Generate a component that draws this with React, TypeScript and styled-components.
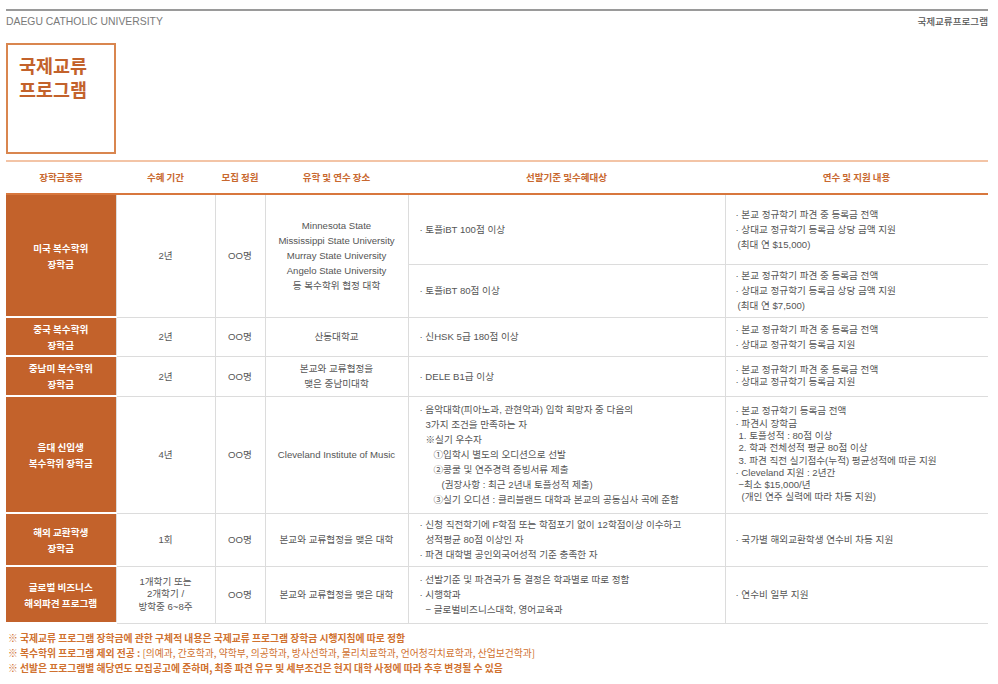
import React from "react";
import styled, { createGlobalStyle } from "styled-components";

const GlobalStyle = createGlobalStyle`
  html, body {
    margin: 0;
    padding: 0;
    background: #fff;
  }
  body {
    font-family: "Liberation Sans", "Noto Sans CJK KR", sans-serif;
    color: #555;
  }
`;

const orange = "#c3622b";

const Page = styled.div`
  width: 982px;
  padding: 9px 10px 0 6px;
`;

const TopBar = styled.div`
  border-top: 2px solid #9a9a9a;
  display: flex;
  justify-content: space-between;
  align-items: center;
  height: 18px;
  padding-top: 1px;
`;

const Brand = styled.span`
  font-size: 10.4px;
  color: #7a7a7a;
`;

const Section = styled.span`
  font-size: 9.6px;
  color: #555;
  font-family: "Noto Sans CJK KR", sans-serif;
  font-weight: 500;
`;

const TitleBox = styled.div`
  margin-top: 13px;
  width: 106px;
  height: 107px;
  border: 2px solid #d9864f;
`;

const Title = styled.h1`
  margin: 0;
  padding: 8px 0 0 11px;
  font-family: "Noto Sans CJK KR", sans-serif;
  font-size: 18.5px;
  font-weight: 700;
  line-height: 24px;
  color: ${orange};
`;

const Divider = styled.div`
  margin-top: 6px;
  border-top: 2px solid #f3c4a6;
`;

const Table = styled.table`
  width: 982px;
  border-collapse: collapse;
  table-layout: fixed;
  font-size: 9.6px;
  line-height: 15px;
`;

const HeadCell = styled.th`
  height: 31px;
  padding: 0;
  font-family: "Noto Sans CJK KR", sans-serif;
  font-size: 9.5px;
  font-weight: 700;
  color: #c8682f;
  text-align: center;
  border-bottom: 2px solid #d8773d;
`;

const KindCell = styled.td`
  background: ${orange};
  color: #fff;
  text-align: center;
  font-family: "Noto Sans CJK KR", sans-serif;
  font-size: 9.6px;
  font-weight: 700;
  line-height: 16px;
  border-bottom: 2px solid #fff;
  padding: 0;
`;

const Cell = styled.td<{ $align?: "left" | "center"; $tight?: boolean }>`
  text-align: ${(p) => p.$align || "center"};
  vertical-align: middle;
  border: 1px solid #dcdcdc;
  border-top: none;
  padding: ${(p) => (p.$align === "left" ? "0 4px 0 11px" : "0 2px")};
  line-height: ${(p) => (p.$tight ? "12.3px" : "15px")};
  white-space: nowrap;
  color: #555;
  &:last-child {
    border-right: none;
    padding-left: 10px;
  }
`;

const Line = styled.div<{ $indent?: number }>`
  padding-left: ${(p) => p.$indent || 0}px;
`;

const Row = styled.tr<{ $h: number }>`
  height: ${(p) => p.$h}px;
`;

const Notes = styled.div`
  margin-top: 7px;
  padding-left: 2px;
  font-family: "Noto Sans CJK KR", sans-serif;
  font-size: 9.8px;
  line-height: 15px;
  color: #d0712f;
  font-weight: 700;
  white-space: nowrap;
`;

const Light = styled.span`
  font-weight: 400;
`;

const lines = (items: [string, number?][]) =>
  items.map(([t, i], k) => (
    <Line key={k} $indent={i}>
      {t}
    </Line>
  ));

export default function App() {
  return (
    <>
      <GlobalStyle />
      <Page>
        <TopBar>
          <Brand>DAEGU CATHOLIC UNIVERSITY</Brand>
          <Section>국제교류프로그램</Section>
        </TopBar>
        <TitleBox>
          <Title>
            국제교류
            <br />
            프로그램
          </Title>
        </TitleBox>
        <Divider />
        <Table>
          <colgroup>
            <col style={{ width: 110 }} />
            <col style={{ width: 99 }} />
            <col style={{ width: 50 }} />
            <col style={{ width: 143 }} />
            <col style={{ width: 317 }} />
            <col style={{ width: 263 }} />
          </colgroup>
          <thead>
            <tr>
              <HeadCell>장학금종류</HeadCell>
              <HeadCell>수혜 기간</HeadCell>
              <HeadCell>모집 정원</HeadCell>
              <HeadCell>유학 및 연수 장소</HeadCell>
              <HeadCell>선발기준 및수혜대상</HeadCell>
              <HeadCell>연수 및 지원 내용</HeadCell>
            </tr>
          </thead>
          <tbody>
            <Row $h={70}>
              <KindCell rowSpan={2}>
                미국 복수학위
                <br />
                장학금
              </KindCell>
              <Cell rowSpan={2}>2년</Cell>
              <Cell rowSpan={2}>OO명</Cell>
              <Cell rowSpan={2}>
                {lines([
                  ["Minnesota State"],
                  ["Mississippi State University"],
                  ["Murray State University"],
                  ["Angelo State University"],
                  ["등 복수학위 협정 대학"],
                ])}
              </Cell>
              <Cell $align="left">· 토플iBT 100점 이상</Cell>
              <Cell $align="left">
                {lines([
                  ["· 본교 정규학기 파견 중 등록금 전액"],
                  ["· 상대교 정규학기 등록금 상당 금액 지원"],
                  ["(최대 연 $15,000)", 2],
                ])}
              </Cell>
            </Row>
            <Row $h={53}>
              <Cell $align="left">· 토플iBT 80점 이상</Cell>
              <Cell $align="left">
                {lines([
                  ["· 본교 정규학기 파견 중 등록금 전액"],
                  ["· 상대교 정규학기 등록금 상당 금액 지원"],
                  ["(최대 연 $7,500)", 2],
                ])}
              </Cell>
            </Row>
            <Row $h={39}>
              <KindCell>
                중국 복수학위
                <br />
                장학금
              </KindCell>
              <Cell>2년</Cell>
              <Cell>OO명</Cell>
              <Cell>산동대학교</Cell>
              <Cell $align="left">· 신HSK 5급 180점 이상</Cell>
              <Cell $align="left">
                {lines([
                  ["· 본교 정규학기 파견 중 등록금 전액"],
                  ["· 상대교 정규학기 등록금 지원"],
                ])}
              </Cell>
            </Row>
            <Row $h={40}>
              <KindCell>
                중남미 복수학위
                <br />
                장학금
              </KindCell>
              <Cell>2년</Cell>
              <Cell>OO명</Cell>
              <Cell>
                {lines([["본교와 교류협정을"], ["맺은 중남미대학"]])}
              </Cell>
              <Cell $align="left">· DELE B1급 이상</Cell>
              <Cell $align="left" $tight>
                {lines([
                  ["· 본교 정규학기 파견 중 등록금 전액"],
                  ["· 상대교 정규학기 등록금 지원"],
                ])}
              </Cell>
            </Row>
            <Row $h={117}>
              <KindCell>
                음대 신입생
                <br />
                복수학위 장학금
              </KindCell>
              <Cell>4년</Cell>
              <Cell>OO명</Cell>
              <Cell>Cleveland Institute of Music</Cell>
              <Cell $align="left">
                {lines([
                  ["· 음악대학(피아노과, 관현악과) 입학 희망자 중 다음의"],
                  ["3가지 조건을 만족하는 자", 6],
                  ["※실기 우수자", 6],
                  ["①입학시 별도의 오디션으로 선발", 14],
                  ["②콩쿨 및 연주경력 증빙서류 제출", 14],
                  ["(권장사항 : 최근 2년내 토플성적 제출)", 22],
                  ["③실기 오디션 : 클리블랜드 대학과 본교의 공동심사 곡에 준함", 14],
                ])}
              </Cell>
              <Cell $align="left" $tight>
                {lines([
                  ["· 본교 정규학기 등록금 전액"],
                  ["· 파견시 장학금"],
                  ["1. 토플성적 : 80점 이상", 3],
                  ["2. 학과 전체성적 평균 80점 이상", 3],
                  ["3. 파견 직전 실기점수(누적) 평균성적에 따른 지원", 3],
                  ["· Cleveland 지원 : 2년간"],
                  ["−최소 $15,000/년", 3],
                  ["(개인 연주 실력에 따라 차등 지원)", 6],
                ])}
              </Cell>
            </Row>
            <Row $h={53}>
              <KindCell>
                해외 교환학생
                <br />
                장학금
              </KindCell>
              <Cell>1회</Cell>
              <Cell>OO명</Cell>
              <Cell>본교와 교류협정을 맺은 대학</Cell>
              <Cell $align="left">
                {lines([
                  ["· 신청 직전학기에 F학점 또는 학점포기 없이 12학점이상 이수하고"],
                  ["성적평균 80점 이상인 자", 6],
                  ["· 파견 대학별 공인외국어성적 기준 충족한 자"],
                ])}
              </Cell>
              <Cell $align="left">· 국가별 해외교환학생 연수비 차등 지원</Cell>
            </Row>
            <Row $h={57}>
              <KindCell>
                글로벌 비즈니스
                <br />
                해외파견 프로그램
              </KindCell>
              <Cell $tight>
                {lines([["1개학기 또는"], ["2개학기 /"], ["방학중 6~8주"]])}
              </Cell>
              <Cell>OO명</Cell>
              <Cell>본교와 교류협정을 맺은 대학</Cell>
              <Cell $align="left">
                {lines([
                  ["· 선발기준 및 파견국가 등 결정은 학과별로 따로 정함"],
                  ["· 시행학과"],
                  ["− 글로벌비즈니스대학, 영어교육과", 6],
                ])}
              </Cell>
              <Cell $align="left">· 연수비 일부 지원</Cell>
            </Row>
          </tbody>
        </Table>
        <Notes>
          <div>※ 국제교류 프로그램 장학금에 관한 구체적 내용은 국제교류 프로그램 장학금 시행지침에 따로 정함</div>
          <div>
            ※ 복수학위 프로그램 제외 전공 :{" "}
            <Light>[의예과, 간호학과, 약학부, 의공학과, 방사선학과, 물리치료학과, 언어청각치료학과, 산업보건학과]</Light>
          </div>
          <div>※ 선발은 프로그램별 해당연도 모집공고에 준하며, 최종 파견 유무 및 세부조건은 현지 대학 사정에 따라 추후 변경될 수 있음</div>
        </Notes>
      </Page>
    </>
  );
}
